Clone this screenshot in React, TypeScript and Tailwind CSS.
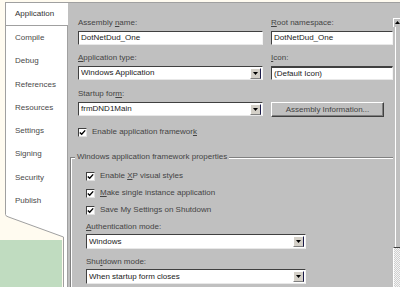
import React from "react";

function U({ c }: { c: string }) {
  return <span className="underline underline-offset-[1px] decoration-[0.5px]">{c}</span>;
}

function Label({ children, mb = "mb-[3px]" }: { children?: React.ReactNode; mb?: string }) {
  return (
    <div className={`h-[10px] leading-[10px] text-[#444] whitespace-nowrap ${mb}`}>{children}</div>
  );
}

function DropBtn() {
  return (
    <div className="w-[11px] h-[11px] mr-[1px] bg-[#d4d0c8] border border-t-white border-l-white border-b-[#808080] border-r-[#1a1a4a] flex items-center justify-center shrink-0">
      <svg width="5" height="3" viewBox="0 0 5 3">
        <path d="M0 0H5L2.5 3Z" fill="#000" />
      </svg>
    </div>
  );
}

function Field({ text, drop, className = "" }: { text: string; drop?: boolean; className?: string }) {
  return (
    <div
      className={`bg-white border border-t-[#404040] border-l-[#404040] border-b-[#e8e8e8] border-r-[#f4f4f4] flex items-center pl-[2px] text-[#1a1a1a] leading-none ${className}`}
    >
      <span className="flex-1 whitespace-nowrap overflow-hidden">{text}</span>
      {drop && <DropBtn />}
    </div>
  );
}

function Check({ children }: { children: React.ReactNode }) {
  return (
    <div className="flex items-center h-[10px] gap-[5px]">
      <div className="w-[9px] h-[9px] bg-white border border-t-[#404040] border-l-[#404040] border-b-[#e0e0e0] border-r-[#e0e0e0] flex items-center justify-center shrink-0">
        <svg width="7" height="7" viewBox="0 0 7 7">
          <path d="M0.8 3.4L2.7 5.3L6.2 1.4" stroke="#000" strokeWidth="1.4" fill="none" />
        </svg>
      </div>
      <span className="leading-[10px] text-[#444] whitespace-nowrap">{children}</span>
    </div>
  );
}

const tabs = [
  "Application",
  "Compile",
  "Debug",
  "References",
  "Resources",
  "Settings",
  "Signing",
  "Security",
  "Publish",
];

export default function App() {
  return (
    <div className="w-[400px] h-[287px] overflow-hidden flex bg-[#fffbf0] text-[8px] font-['Liberation_Sans',Arial,sans-serif]">
      {/* Left tab strip */}
      <div className="w-[68px] pt-[2px] flex flex-col">
        <div className="flex-1 flex flex-col border-r border-[#a0a0a0]">
          <div className="ml-[5px] bg-white border-l border-t border-[#a0a0a0] flex flex-col">
            {tabs.map((t, i) => (
              <div
                key={t}
                className={
                  i === 0
                    ? "h-[23.3px] -mr-px relative bg-white border-b border-[#a0a0a0] pl-[9px] flex items-center text-[#333] leading-none"
                    : "h-[23.3px] pl-[9px] flex items-center text-[#4a4a4a] leading-none"
                }
              >
                {t}
              </div>
            ))}
          </div>
          <svg className="flex-1 block" width="67" height="76" viewBox="0 0 67 76" preserveAspectRatio="none">
            <rect x="0" y="0" width="67" height="76" fill="#fffbf0" />
            <path d="M5 0H67V76H63V24L8 4Q5 3 5 1Z" fill="#ffffff" />
            <path d="M5.5 0V1.5Q5.5 3 8 3.8L63.5 24V76" stroke="#a0a0a0" strokeWidth="1" fill="none" />
            <rect x="0" y="27" width="62" height="49" fill="#c0dcc0" />
          </svg>
        </div>
      </div>

      {/* Main panel */}
      <div className="flex-1 mt-[2px] border-t border-[#a0a0a0] bg-[#c0c0c0] flex">
        <div className="flex-1 flex flex-col pt-[15px]">
          {/* Row 1 */}
          <div className="flex pl-[10px] gap-[8px]">
            <div className="w-[185px] flex flex-col">
              <Label>
                Assembly <U c="n" />ame:
              </Label>
              <Field className="h-[14px]" text="DotNetDud_One" />
            </div>
            <div className="w-[122px] flex flex-col">
              <Label>
                <U c="R" />oot namespace:
              </Label>
              <Field className="h-[14px]" text="DotNetDud_One" />
            </div>
          </div>
          {/* Row 2 */}
          <div className="flex pl-[10px] gap-[8px] mt-[8px]">
            <div className="w-[185px] flex flex-col">
              <Label>
                <U c="A" />pplication type:
              </Label>
              <Field className="h-[14px]" text="Windows Application" drop />
            </div>
            <div className="w-[122px] flex flex-col">
              <Label>
                <U c="I" />con:
              </Label>
              <Field className="h-[14px] border-t-2 border-t-[#202020]" text="(Default Icon)" />
            </div>
          </div>
          {/* Row 3 */}
          <div className="flex pl-[10px] gap-[8px] mt-[9px]">
            <div className="w-[185px] flex flex-col">
              <Label>
                Startup for<U c="m" />:
              </Label>
              <Field className="h-[14px]" text="frmDND1Main" drop />
            </div>
            <div className="w-[122px] flex flex-col">
              <Label />
              <div className="w-[113px] h-[15px] bg-[#c0c0c0] border border-t-white border-l-white border-b-[#404040] border-r-[#404040] shadow-[inset_-1px_-1px_0_#808080] flex items-center justify-center text-[#444] leading-none">
                Assembly Information...
              </div>
            </div>
          </div>
          {/* Enable framework */}
          <div className="pl-[10px] mt-[10px]">
            <Check>
              Enable application framewor<U c="k" />
            </Check>
          </div>
          {/* Group box */}
          <div className="ml-[2px] mt-[20px] relative flex-1 border-t border-l border-[#808080] shadow-[inset_1px_1px_0_#ffffff] pt-[13px] pl-[15px] flex flex-col">
            <div className="absolute left-[4px] -top-[6px] bg-[#c0c0c0] px-[2px] leading-[10px] text-[#444] whitespace-nowrap">
              Windows application framework properties
            </div>
            <Check>
              Enable <U c="X" />P visual styles
            </Check>
            <div className="mt-[7px]">
              <Check>
                <U c="M" />ake single instance application
              </Check>
            </div>
            <div className="mt-[7px]">
              <Check>Save My Settings on Shutdown</Check>
            </div>
            <div className="mt-[7px] flex flex-col w-[220px]">
              <Label mb="mb-[2px]">
                <U c="A" />uthentication mode:
              </Label>
              <Field className="h-[15px]" text="Windows" drop />
            </div>
            <div className="mt-[8px] flex flex-col w-[220px]">
              <Label mb="mb-[2px]">
                Shu<U c="t" />down mode:
              </Label>
              <Field className="h-[15px]" text="When startup form closes" drop />
            </div>
          </div>
        </div>
        {/* Scrollbar */}
        <div className="w-[7px] flex flex-col">
          <div className="h-[15px]" />
          <div className="h-[9px] border-t border-l border-white bg-[#c0c0c0] flex items-start justify-end pt-[2px]">
            <svg width="5" height="3" viewBox="0 0 5 3">
              <path d="M0 3H5L2.5 0Z" fill="#000" />
            </svg>
          </div>
          <div className="flex-1 ml-[2px] border-l border-white" />
          <div className="h-[40px] border-t border-[#404040] border-l border-l-white bg-[repeating-conic-gradient(#cfcfcf_0%_25%,#f4f4f4_0%_50%)] bg-size-[2px_2px]" />
        </div>
      </div>
    </div>
  );
}
